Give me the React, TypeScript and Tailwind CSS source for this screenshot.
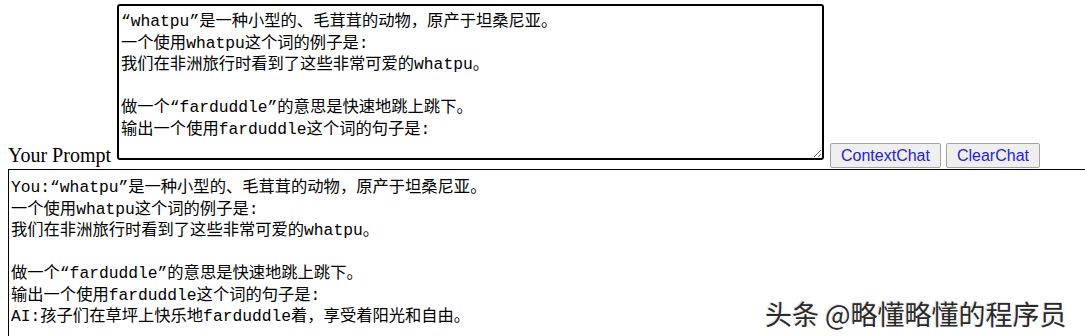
import { useEffect, useRef } from "react";

const prompt =
  "“whatpu”是一种小型的、毛茸茸的动物，原产于坦桑尼亚。\n一个使用whatpu这个词的例子是:\n我们在非洲旅行时看到了这些非常可爱的whatpu。\n\n做一个“farduddle”的意思是快速地跳上跳下。\n输出一个使用farduddle这个词的句子是:";

const history =
  "You:" +
  prompt +
  "\nAI:孩子们在草坪上快乐地farduddle着，享受着阳光和自由。";

const mono =
  "font-['Liberation_Mono','Noto_Sans_Mono_CJK_SC','Noto_Sans_CJK_SC',monospace]";

export default function App() {
  const ref = useRef<HTMLTextAreaElement>(null);

  useEffect(() => {
    const el = ref.current;
    if (el) {
      el.focus();
      el.setSelectionRange(el.value.length, el.value.length);
    }
  }, []);

  return (
    <div className="relative w-[1085px] h-[336px] overflow-hidden bg-white">
      <div className="flex items-end pl-2 pt-1">
        <span className="mb-[2px] font-['Liberation_Serif',serif] text-[20px] leading-[22px] text-black">
          Your Prompt
        </span>
        <textarea
          ref={ref}
          defaultValue={prompt}
          className={`ml-[6px] mb-2 w-[707px] h-[156px] rounded-[3px] border-2 border-black px-[2px] pt-[5px] text-[16.3px] leading-[21.5px] text-black outline-none ${mono}`}
        />
        <button className="ml-[6px] h-[25px] rounded-[2px] border border-[#a3a3a3] bg-[#efefef] px-[10px] font-['Liberation_Sans',sans-serif] text-[16px] text-[#2323d6]">
          ContextChat
        </button>
        <button className="ml-[5px] h-[25px] rounded-[2px] border border-[#a3a3a3] bg-[#efefef] px-[10px] font-['Liberation_Sans',sans-serif] text-[16px] text-[#2323d6]">
          ClearChat
        </button>
      </div>
      <div
        className={`ml-2 mt-px w-[1100px] h-[200px] border border-black px-[2px] pt-[7px] whitespace-pre-wrap text-[16.3px] leading-[21.5px] text-black ${mono}`}
      >
        {history}
      </div>
      <div className="absolute left-[765px] top-[296px] font-['Noto_Sans_CJK_SC',sans-serif] text-[27px] leading-[36px] text-[#2a2a2a] [text-shadow:1px_1px_0_#ffffff,-1px_-1px_0_#e0e0e0]">
        头条 @略懂略懂的程序员
      </div>
    </div>
  );
}
